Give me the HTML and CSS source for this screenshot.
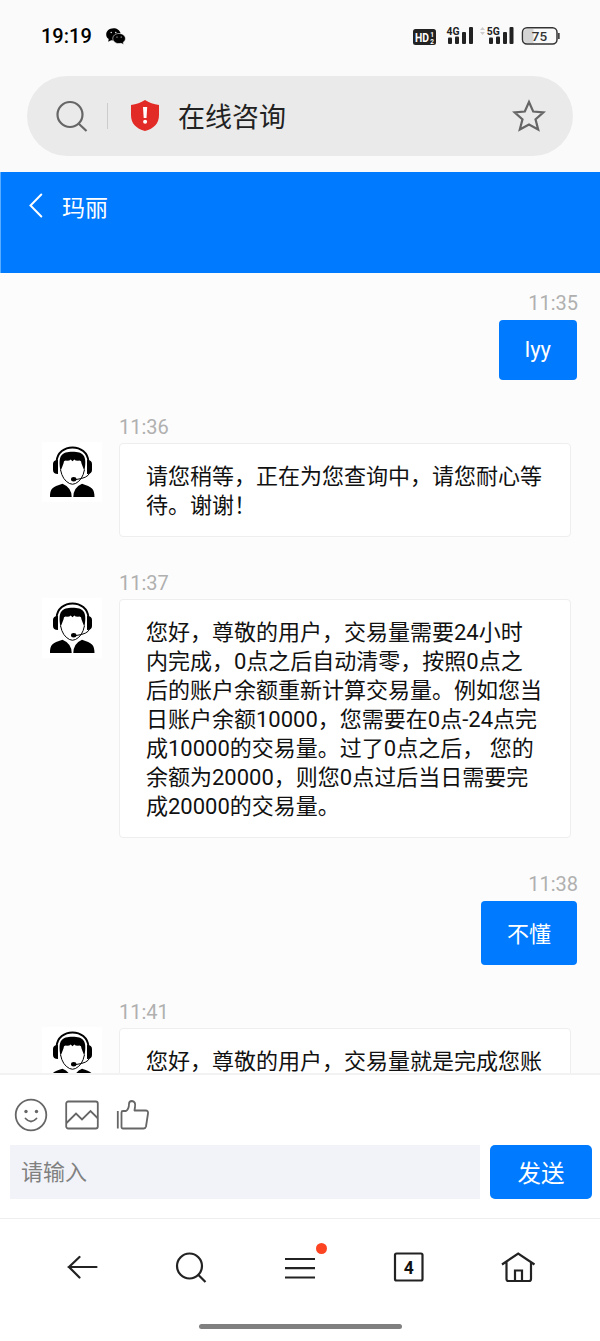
FILE: index.html
```html
<!DOCTYPE html>
<html lang="zh-CN">
<head>
<meta charset="utf-8">
<title>在线咨询</title>
<link rel="stylesheet" href="styles.css">
</head>
<body>
<svg class="defs" width="0" height="0">
  <symbol id="agent" viewBox="0 0 60 60">
    <path d="M14.500 20C15.500 0.500 45.500 0.500 46.500 20" fill="none" stroke="#000" stroke-width="2"/>
    <path d="M16 18V32Q11 32 11 28V22Q11 18 16 18ZM45 18V32Q50 32 50 28V22Q50 18 45 18Z"/>
    <path d="M18.600 29C15.500 13 20 9.700 30.500 9.700C41 9.700 45.500 13 42.400 29L39.500 21.500Q39.500 18.800 37.500 18.600Q33.500 19 32.300 17.500L30.500 19.200L28.700 17.500Q27.500 19 23.500 18.600Q21.500 18.800 21.500 21.500Z"/>
    <path d="M18.600 28Q20.500 38 27.500 41.500Q30.500 43 33.500 41.500Q40.500 38 42.400 28M47.500 31Q46 36 34 37.500" fill="none" stroke="#000" stroke-width="1"/>
    <ellipse cx="31.700" cy="37.200" rx="2.700" ry="2.200"/>
    <path d="M8 55C8 47 10 45 20.500 41.800Q29.500 45.500 29.700 55ZM31.300 55Q31.500 45.500 40 41.800C50 45 52.500 47 52.500 55Z"/>
  </symbol>
</svg>
<div class="screen">
  <div class="status">
    <span class="clock">19:19</span>
    <svg class="wechat" width="20" height="18" viewBox="0 0 20 18">
      <path d="M7.500.2C3.300.2.200 3 .2 6.500c0 2 1 3.500 2.500 4.600l-.5 2.600 3-1.500 2.300.3L14.500 5C13.800 2.300 11 .2 7.500.2Z"/>
      <path d="M13 5.500c-3.500 0-6.200 2.200-6.200 5s2.700 5.100 6.200 5.100l2-.3 2.800 1.300-.6-2.200c1.400-1 2.200-2.300 2.200-3.900 0-2.800-2.900-5-6.400-5Z" stroke="#fafafa" stroke-width=".6"/>
      <g fill="#fafafa"><circle cx="5.200" cy="4.500" r=".7"/><circle cx="9.800" cy="4.500" r=".7"/><circle cx="11" cy="9" r=".6"/><circle cx="15.200" cy="9" r=".6"/></g>
    </svg>
    <svg class="signals" width="150" height="24" viewBox="0 0 150 24">
      <rect x="3" y="5" width="23" height="16" rx="2.500" fill="#222"/>
      <g fill="#fff" font-weight="700"><text x="5" y="17.500" font-size="12.500" textLength="14" lengthAdjust="spacingAndGlyphs">HD</text><text x="20.300" y="12.500" font-size="6.500">1</text><text x="20.300" y="20" font-size="6.500">2</text></g>
      <g fill="#222">
        <text x="36.500" y="10.800" font-size="11.500" font-weight="700" textLength="13" lengthAdjust="spacingAndGlyphs">4G</text>
        <rect x="38" y="13.500" width="4" height="6.500" rx="1"/><rect x="45" y="12.500" width="4" height="7.500" rx="1"/><rect x="52" y="8" width="4" height="12" rx="1"/><rect x="59" y="3" width="4" height="17" rx="1"/>
        <text x="76.700" y="10.800" font-size="11.500" font-weight="700" textLength="13" lengthAdjust="spacingAndGlyphs">5G</text>
        <rect x="79" y="13.500" width="4" height="6.500" rx="1"/><rect x="86" y="12.500" width="4" height="7.500" rx="1"/><rect x="93" y="8" width="4" height="12" rx="1"/><rect x="99.500" y="3" width="4" height="17" rx="1"/>
      </g>
      <path d="M70 6L72.500 3L75 6ZM70 8L72.500 11L75 8Z" fill="#ccc"/>
      <path d="M117 5H123.500V19H117Q114 19 114 16V8Q114 5 117 5Z" fill="#d4d4d4"/>
      <rect x="112.500" y="3.700" width="34.500" height="16.300" rx="4.500" fill="none" stroke="#333" stroke-width="1.500"/>
      <rect x="148" y="9" width="1.700" height="6" fill="#444"/>
      <text x="121.800" y="16.800" font-size="13.500" font-weight="500" fill="#333" textLength="15.500">75</text>
    </svg>
  </div>
  <div class="toolbar"><div class="address">
    <svg width="34" height="34" viewBox="0 0 34 34" fill="none" stroke="#666" stroke-width="2.200"><circle cx="15" cy="15.500" r="12.500"/><path d="M23.500 24.500L31.500 32"/></svg>
    <span class="divider"></span>
    <svg class="shield" width="30" height="34" viewBox="0 0 30 34"><path d="M15 1Q21 5 29 6V16C29 24.500 24 29.500 15 32C6 29.500 1 24.500 1 16V6Q9 5 15 1Z" fill="#e22b26"/><path d="M13 8H17.200L16.500 19H13.700Z" fill="#fff"/><circle cx="15.100" cy="22.700" r="2" fill="#fff"/></svg>
    <span class="page-title">在线咨询</span>
    <svg class="star" width="34" height="34" viewBox="0 0 34 34"><path d="M17 3L21.200 12.500L31.500 13.300L23.500 20.300L26.200 30.500L17 25.500L7.800 30.500L10.500 20.300L2.500 13.300L12.800 12.500Z" fill="none" stroke="#666" stroke-width="2.200"/></svg>
  </div></div>
  <div class="header">
    <svg width="14" height="25" viewBox="0 0 14 25"><path d="M12.300 1.500L1.500 12.500L12.300 23.500" fill="none" stroke="#fff" stroke-width="2" stroke-linecap="round"/></svg>
    <span class="name">玛丽</span>
  </div>
  <div class="chat">
    <div class="mine"><time>11:35</time><div class="bubble latin">lyy</div></div>
    <div class="theirs">
      <svg class="avatar"><use href="#agent"/></svg>
      <div class="message"><time>11:36</time><div class="bubble">请您稍等，正在为您查询中，请您耐心等<br>待。谢谢！</div></div>
    </div>
    <div class="theirs">
      <svg class="avatar"><use href="#agent"/></svg>
      <div class="message"><time>11:37</time><div class="bubble">您好，尊敬的用户，交易量需要24小时<br>内完成，0点之后自动清零，按照0点之<br>后的账户余额重新计算交易量。例如您当<br>日账户余额10000，您需要在0点-24点完<br>成10000的交易量。过了0点之后， 您的<br>余额为20000，则您0点过后当日需要完<br>成20000的交易量。</div></div>
    </div>
    <div class="mine"><time>11:38</time><div class="bubble">不懂</div></div>
    <div class="theirs">
      <svg class="avatar"><use href="#agent"/></svg>
      <div class="message"><time>11:41</time><div class="bubble">您好，尊敬的用户，交易量就是完成您账</div></div>
    </div>
  </div>
  <div class="composer">
    <div class="tools">
      <svg width="34" height="34" viewBox="0 0 34 34" fill="none" stroke="#666" stroke-width="1.800"><circle cx="17" cy="17" r="15.300"/><path d="M11.500 20.500Q17 26.500 22.500 20.500" stroke-linecap="round"/><g fill="#666" stroke="none"><circle cx="12" cy="13.500" r="1.700"/><circle cx="22.500" cy="13.500" r="1.700"/></g></svg>
      <svg width="34" height="34" viewBox="0 0 34 34" fill="none" stroke="#666" stroke-width="1.800"><rect x="1.200" y="3.500" width="31.600" height="27" rx="2"/><path d="M1.500 25L11 15.500L17 21.500L25.500 13L32.500 20"/></svg>
      <svg width="34" height="34" viewBox="0 0 34 34" fill="none" stroke="#666" stroke-width="1.800" stroke-linejoin="round"><path d="M1.800 13V30.500M5.500 14.500Q5.500 13 7 13H10Q13 11 13 6Q13 3 16 3Q20 3.500 19 9L18.500 12.500H29.500Q32.500 12.500 32 15.500L30 28.500Q29.500 30.500 27.500 30.500H7Q5.500 30.500 5.500 29Z"/></svg>
    </div>
    <div class="entry"><input class="field" type="text" placeholder="请输入"><button class="send">发送</button></div>
  </div>
  <div class="nav">
    <svg viewBox="0 0 36 36"><path d="M4.500 18H32.500M15.500 8L5 18L15.500 28.500" stroke-linecap="round"/></svg>
    <svg viewBox="0 0 36 36"><circle cx="16.500" cy="17" r="12.500"/><path d="M25 25.500L32.500 33"/></svg>
    <div class="menu"><svg viewBox="0 0 36 36"><path d="M3 10H33M3 19.200H33M3 28.500H33"/></svg><span class="dot"></span></div>
    <svg viewBox="0 0 36 36"><rect x="4" y="4.500" width="27.500" height="27" rx="1.500"/><text x="17.800" y="24.500" text-anchor="middle" font-size="17.500" font-weight="700" fill="#111" stroke="none">4</text></svg>
    <svg viewBox="0 0 36 36"><path d="M2 15.500L18.200 4.500L34.500 15.500M6.500 13V30Q6.500 32 8.500 32H29Q31 32 31 30V13M15 32V21.500H22V32"/></svg>
  </div>
  <div class="handle"></div>
</div>
</body>
</html>
```
FILE: styles.css
```css
* { box-sizing: border-box; }
body { margin: 0; background: #fff; font-family: Roboto, "Noto Sans CJK SC", sans-serif; }
.defs { display: block; }
.screen { width: 600px; height: 1341px; display: flex; flex-direction: column; overflow: hidden; background: #fff; }
svg { display: block; flex: none; }

.status { height: 76px; flex: none; padding: 24px 40px 0 41px; display: flex; align-items: flex-start; background: #fafafa; }
.clock { width: 65px; font-size: 20px; font-weight: 500; line-height: 25px; color: #000; }
.wechat { margin-top: 4px; }
.signals { margin: 0 0 0 auto; }

.toolbar { height: 96px; flex: none; padding: 0 27px 16px; background: #fafafa; }
.address { height: 80px; padding: 0 27px 0 28px; display: flex; align-items: center; border-radius: 40px; background: #eaeaea; }
.divider { width: 1px; height: 26px; margin: 0 22px 0 18px; background: #ccc; }
.shield { margin-right: 18px; }
.page-title { padding-top: 4px; font-size: 27px; line-height: 38px; color: #222; }
.star { margin-left: auto; }

.header { height: 101px; flex: none; padding: 21px 0 0 28px; display: flex; align-items: flex-start; gap: 19px; border-left: 1px solid #5cacff; background: #007aff; color: #fff; font-size: 23px; line-height: 28px; }
.name { padding-top: 2px; }

.chat { height: 800px; flex: none; overflow: hidden; padding-top: 18px; background: #fcfcfc; }
time { display: block; height: 24px; font-size: 20px; line-height: 24px; color: #b0b0b0; }
.mine { display: flex; flex-direction: column; align-items: flex-end; gap: 5px; margin-bottom: 35px; padding-right: 23px; }
.mine time { margin-right: -1px; }
.mine .bubble { height: 64px; padding: 1px 26px 0; border-radius: 4px; background: #007aff; color: #fff; font-size: 22px; line-height: 65px; }
.mine .latin { height: 60px; padding-top: 0; line-height: 59px; }
.theirs { display: flex; margin-bottom: 34px; padding-left: 42px; }
.avatar { width: 60px; height: 60px; margin: 27px 17px 0 0; background: #fff; }
.message { width: 452px; }
.message .bubble { margin-top: 4px; padding: 18px 0 16px 26px; border: 1px solid #eee; border-radius: 4px; background: #fff; color: #111; font-size: 22px; line-height: 29px; white-space: nowrap; }

.composer { height: 146px; flex: none; padding: 23px 8px 0 10px; border-top: 2px solid #f2f2f2; border-bottom: 1px solid #eee; background: #fff; }
.tools { display: flex; gap: 17px; padding-left: 4px; }
.entry { display: flex; gap: 10px; margin-top: 13px; height: 54px; }
.field { flex: 1; min-width: 0; padding: 1px 11px 0; border: 0; background: #f2f3f8; font: inherit; font-size: 22px; }
.field::placeholder { color: #808080; opacity: 1; }
.send { width: 102px; padding: 0; border: 0; border-radius: 5px; background: #007aff; color: #fff; font: inherit; font-size: 23.5px; }

.nav { height: 104px; flex: none; padding: 30px 64px 0; display: flex; justify-content: space-between; background: #fff; }
.nav svg { width: 36px; height: 36px; fill: none; stroke: #222; stroke-width: 2.2; }
.menu { position: relative; }
.dot { position: absolute; left: 34px; top: -6px; width: 11px; height: 11px; border-radius: 50%; background: #fc4422; }
.handle { width: 203px; height: 5px; margin: 1px auto 0; border-radius: 3px; background: #808080; flex: none; }
```
